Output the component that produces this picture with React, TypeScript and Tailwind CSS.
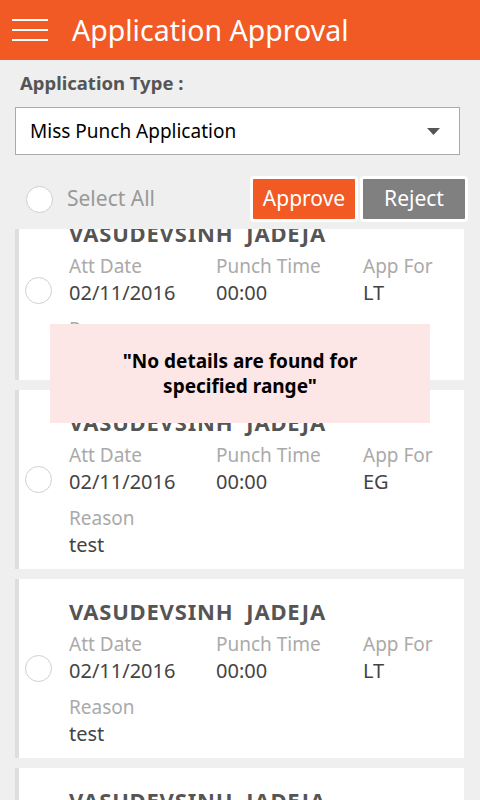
import React from "react";

const font = { fontFamily: '"Noto Sans", "Open Sans", sans-serif' };

const items = [
  { name: "VASUDEVSINH  JADEJA", date: "02/11/2016", time: "00:00", appFor: "LT", reason: "test" },
  { name: "VASUDEVSINH  JADEJA", date: "02/11/2016", time: "00:00", appFor: "EG", reason: "test" },
  { name: "VASUDEVSINH  JADEJA", date: "02/11/2016", time: "00:00", appFor: "LT", reason: "test" },
  { name: "VASUDEVSINH  JADEJA", date: "02/11/2016", time: "00:00", appFor: "LT", reason: "test" }
];

function Radio() {
  return <span className="block h-[27px] w-[27px] shrink-0 rounded-full border-[1.5px] border-[#cfcfcf] bg-white" />;
}

function Card({ item }: { item: (typeof items)[number] }) {
  return (
    <article className="flex h-[179px] items-center border-l-4 border-[#dedede] bg-white pl-[6px] pr-3">
      <Radio />
      <div className="ml-[17px] flex-1 self-start pt-[19px]">
        <p className="whitespace-pre text-[22px] font-bold leading-[27px] tracking-[0.8px] text-[#555]">{item.name}</p>
        <div className="mt-[7px] grid grid-cols-[147px_147px_1fr]">
          <span className="text-[19px] leading-[24px] text-[#aaa]">Att Date</span>
          <span className="text-[19px] leading-[24px] text-[#aaa]">Punch Time</span>
          <span className="text-[19px] leading-[24px] text-[#aaa]">App For</span>
          <span className="text-[20px] leading-[30px] text-[#444]">{item.date}</span>
          <span className="text-[20px] leading-[30px] text-[#444]">{item.time}</span>
          <span className="text-[20px] leading-[30px] text-[#444]">{item.appFor}</span>
        </div>
        <p className="mt-[9px] text-[19px] leading-[24px] text-[#aaa]">Reason</p>
        <p className="text-[20px] leading-[30px] text-[#444]">{item.reason}</p>
      </div>
    </article>
  );
}

export default function App() {
  return (
    <div className="relative flex h-[800px] w-[480px] flex-col overflow-hidden bg-[#efefef]" style={font}>
      <header className="flex h-[60px] shrink-0 items-center bg-[#f15a24] px-3">
        <div className="flex w-[36px] flex-col gap-[8px]">
          <span className="block h-[2px] bg-white" />
          <span className="block h-[2px] bg-white" />
          <span className="block h-[2px] bg-white" />
        </div>
        <h1 className="ml-[24px] text-[28.5px] leading-none text-white">Application Approval</h1>
      </header>

      <div className="px-[15px]">
        <p className="mt-[10px] pl-[5px] text-[18.5px] font-bold leading-[25px] text-[#555]">Application Type :</p>
        <div className="mr-[5px] mt-[12px] flex h-[48px] items-center justify-between border border-[#aaa] bg-white pl-[14px] pr-[19px]">
          <span className="text-[19px] text-black">Miss Punch Application</span>
          <svg width="13" height="7" viewBox="0 0 13 7">
            <path d="M0 0h13L6.5 7z" fill="#555" />
          </svg>
        </div>

        <div className="mt-[21px] flex items-center">
          <span className="ml-[11px]"><Radio /></span>
          <span className="ml-[14px] flex-1 text-[21px] text-[#999]">Select All</span>
          <button className="ml-[-2px] h-[46px] w-[108px] rounded-[4px] border-[3px] border-white bg-[#f15a24] text-[21px] text-white">
            Approve
          </button>
          <button className="ml-[2px] mr-[-3px] h-[46px] w-[108px] rounded-[4px] border-[3px] border-white bg-[#808080] text-[21px] text-white">
            Reject
          </button>
        </div>
      </div>

      <div className="mt-[7px] flex-1 overflow-hidden px-[15px] pr-[16px]">
        <div className="mt-[-28px] flex flex-col gap-[10px]">
          {items.map((item, i) => (
            <Card key={i} item={item} />
          ))}
        </div>
      </div>

      <div className="absolute left-[50px] top-[324px] flex h-[99px] w-[380px] items-center justify-center bg-[#fde6e6] px-[60px]">
        <p className="text-center text-[19px] font-bold leading-[25px] text-black">
          "No details are found for specified range"
        </p>
      </div>
    </div>
  );
}
